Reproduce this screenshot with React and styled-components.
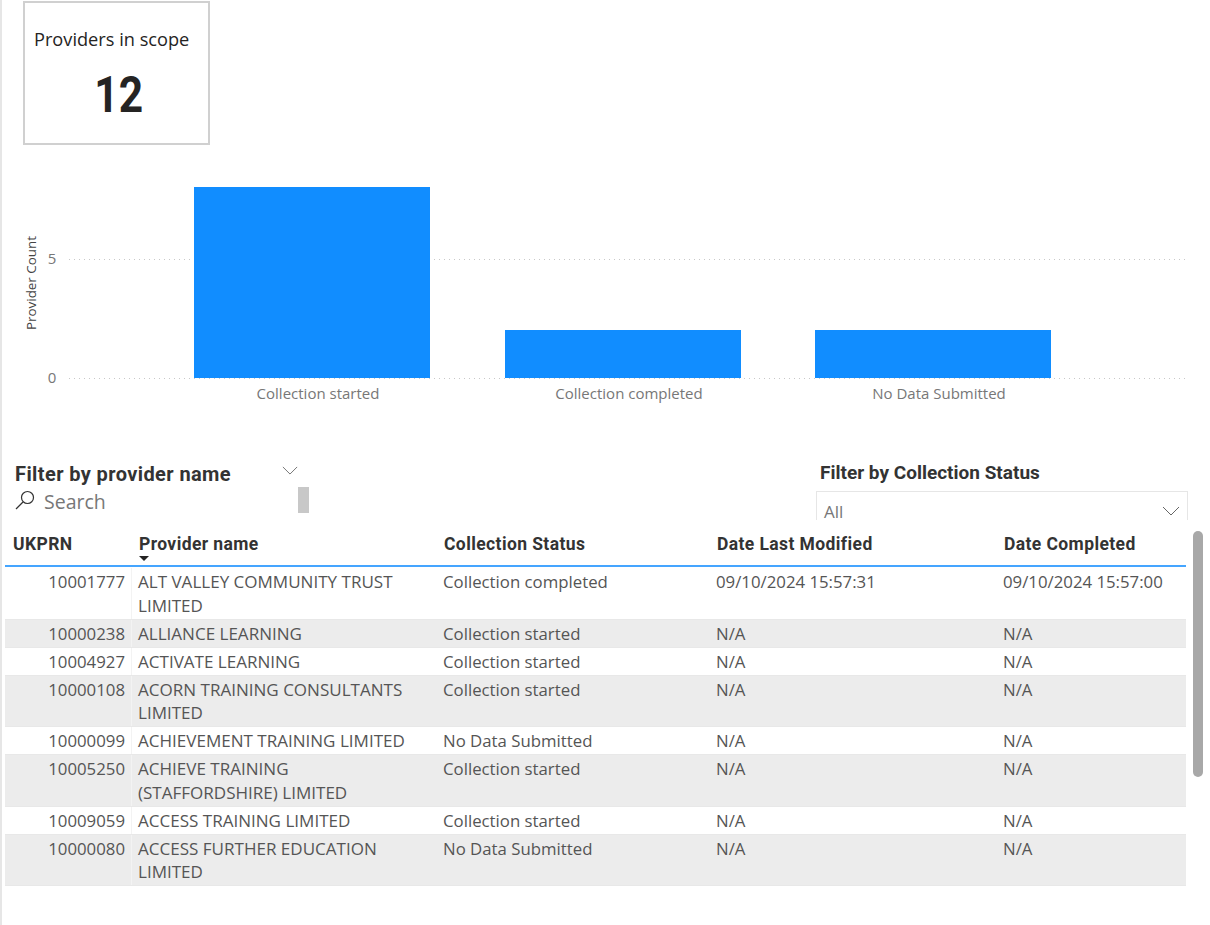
import React from 'react';
import styled, { createGlobalStyle } from 'styled-components';

const BODY_FONT = '"Open Sans", "Noto Sans", "Liberation Sans", sans-serif';
const HEAD_FONT = 'Roboto, "Liberation Sans", sans-serif';

const COLUMNS = '127px 305px 273px 287px 189px';

const BARS = [
  { label: 'Collection started', x: 194, y: 187 },
  { label: 'Collection completed', x: 505, y: 330 },
  { label: 'No Data Submitted', x: 815, y: 330 },
];

const ROWS = [
  { id: '10001777', name: 'ALT VALLEY COMMUNITY TRUST LIMITED', status: 'Collection completed', modified: '09/10/2024 15:57:31', completed: '09/10/2024 15:57:00' },
  { id: '10000238', name: 'ALLIANCE LEARNING', status: 'Collection started', modified: 'N/A', completed: 'N/A' },
  { id: '10004927', name: 'ACTIVATE LEARNING', status: 'Collection started', modified: 'N/A', completed: 'N/A' },
  { id: '10000108', name: 'ACORN TRAINING CONSULTANTS LIMITED', status: 'Collection started', modified: 'N/A', completed: 'N/A' },
  { id: '10000099', name: 'ACHIEVEMENT TRAINING LIMITED', status: 'No Data Submitted', modified: 'N/A', completed: 'N/A' },
  { id: '10005250', name: 'ACHIEVE TRAINING (STAFFORDSHIRE) LIMITED', status: 'Collection started', modified: 'N/A', completed: 'N/A' },
  { id: '10009059', name: 'ACCESS TRAINING LIMITED', status: 'Collection started', modified: 'N/A', completed: 'N/A' },
  { id: '10000080', name: 'ACCESS FURTHER EDUCATION LIMITED', status: 'No Data Submitted', modified: 'N/A', completed: 'N/A' },
];

const Chevron = ({ size = 18 }) => (
  <svg width={size} height={size / 2 + 1} viewBox="0 0 18 10" fill="none" stroke="#666" strokeWidth="1">
    <path d="M1 1l8 8 8-8" />
  </svg>
);

const App = () => (
  <Page>
    <GlobalStyle />
    <Card>
      <CardTitle>Providers in scope</CardTitle>
      <CardValue>12</CardValue>
    </Card>

    <ChartSvg width="1208" height="270" viewBox="2 150 1208 270">
      <text transform="translate(36 283) rotate(-90)" textAnchor="middle" fontSize="13.4" fill="#444">
        Provider Count
      </text>
      <text x="52" y="264" textAnchor="middle" fontSize="15" fill="#777">5</text>
      <text x="52" y="383" textAnchor="middle" fontSize="15" fill="#777">0</text>
      <line x1="69" x2="1188" y1="259.5" y2="259.5" stroke="#c8c8c8" strokeDasharray="1 4" />
      <line x1="69" x2="1188" y1="378.5" y2="378.5" stroke="#c8c8c8" strokeDasharray="1 4" />
      {BARS.map(({ label, x, y }) => (
        <g key={label}>
          <rect x={x} y={y} width="236" height={378 - y} fill="#118DFF" />
          <text x={x + 124} y="399" textAnchor="middle" fontSize="15" fill="#777">{label}</text>
        </g>
      ))}
    </ChartSvg>

    <FilterRow>
      <ProviderSlicer>
        <SlicerHeader>
          <ProviderTitle>Filter by provider name</ProviderTitle>
          <Chevron size={16} />
        </SlicerHeader>
        <SearchRow>
          <svg width="20" height="20" viewBox="0 0 20 20" fill="none" stroke="#333" strokeWidth="1.2">
            <circle cx="12.5" cy="7.5" r="6" />
            <path d="M8 12L1 19" />
          </svg>
          <SearchText>Search</SearchText>
          <SlicerThumb />
        </SearchRow>
      </ProviderSlicer>
      <StatusSlicer>
        <StatusTitle>Filter by Collection Status</StatusTitle>
        <Dropdown>
          <DropdownValue>All</DropdownValue>
          <Chevron />
        </Dropdown>
      </StatusSlicer>
    </FilterRow>

    <TableArea>
      <Table>
        <HeaderRow>
          <HeaderCell>UKPRN</HeaderCell>
          <HeaderCell>
            Provider name
            <SortArrow />
          </HeaderCell>
          <HeaderCell>Collection Status</HeaderCell>
          <HeaderCell>Date Last Modified</HeaderCell>
          <HeaderCell>Date Completed</HeaderCell>
        </HeaderRow>
        {ROWS.map(({ id, name, status, modified, completed }, index) => (
          <Row key={id} $shaded={index % 2 === 1}>
            <IdCell>{id}</IdCell>
            <NameCell>{name}</NameCell>
            <Cell>{status}</Cell>
            <Cell>{modified}</Cell>
            <Cell>{completed}</Cell>
          </Row>
        ))}
      </Table>
      <ScrollThumb />
    </TableArea>
  </Page>
);

export default App;

const GlobalStyle = createGlobalStyle`
  html, body {
    margin: 0;
    padding: 0;
    background: #fff;
  }
`;

const Page = styled.div`
  width: 1208px;
  height: 924px;
  overflow: hidden;
  border-left: 2px solid #e6e6e6;
  font-family: ${BODY_FONT};
  padding-top: 1px;
`;

const Card = styled.div`
  width: 187px;
  height: 144px;
  margin-left: 21px;
  padding: 24px 0 0 9px;
  box-sizing: border-box;
  border: 2px solid #d0d0d0;
`;

const CardTitle = styled.div`
  font-size: 18.2px;
  line-height: 24px;
  color: #252423;
  white-space: nowrap;
`;

const CardValue = styled.div`
  margin-top: 16px;
  padding-left: 56px;
  font-family: ${HEAD_FONT};
  font-size: 50px;
  line-height: 56px;
  font-weight: 700;
  color: #252423;
  transform: scaleX(0.85);
  transform-origin: 85px 0;
`;

const ChartSvg = styled.svg`
  display: block;
  margin-top: 5px;
  font-family: ${BODY_FONT};
`;

const FilterRow = styled.div`
  display: flex;
  justify-content: space-between;
  height: 60px;
  margin-top: 40px;
  padding: 0 22px 0 13px;
`;

const ProviderSlicer = styled.div`
  width: 294px;
`;

const SlicerHeader = styled.div`
  display: flex;
  justify-content: space-between;
  align-items: flex-start;
  height: 26px;
  padding: 1px 11px 0 0;

  svg {
    margin-top: 5px;
  }
`;

const ProviderTitle = styled.div`
  font-family: ${HEAD_FONT};
  font-size: 20px;
  line-height: 26px;
  font-weight: 700;
  letter-spacing: 0.4px;
  color: #333;
`;

const SearchRow = styled.div`
  display: flex;
  align-items: center;
  gap: 9px;
  height: 26px;
`;

const SearchText = styled.span`
  flex: 1;
  padding-top: 2px;
  font-size: 19.5px;
  color: #777;
`;

const SlicerThumb = styled.div`
  width: 11px;
  height: 26px;
  background: #c8c8c8;
`;

const StatusSlicer = styled.div`
  width: 372px;
`;

const StatusTitle = styled.div`
  margin-top: 1px;
  padding-left: 4px;
  font-family: ${HEAD_FONT};
  font-size: 19px;
  line-height: 24px;
  font-weight: 700;
  color: #333;
`;

const Dropdown = styled.div`
  display: flex;
  justify-content: space-between;
  align-items: flex-start;
  height: 29px;
  margin-top: 6px;
  padding: 0 7px 0 7px;
  box-sizing: border-box;
  border: 1px solid #e6e6e6;
  border-bottom: 0;

  svg {
    margin-top: 14px;
  }
`;

const DropdownValue = styled.span`
  padding-top: 12px;
  font-size: 17px;
  line-height: 16px;
  color: #777;
`;

const TableArea = styled.div`
  display: flex;
  align-items: flex-start;
  gap: 7px;
  margin-top: 10px;
  padding-left: 3px;
`;

const Table = styled.div`
  width: 1181px;
`;

const HeaderRow = styled.div`
  display: grid;
  grid-template-columns: ${COLUMNS};
  height: 37px;
  margin-bottom: 1px;
  box-sizing: border-box;
  border-bottom: 2px solid #45a5ff;
`;

const HeaderCell = styled.div`
  position: relative;
  padding: 4px 6px 0 7px;
  font-family: ${HEAD_FONT};
  font-size: 17.5px;
  line-height: 20px;
  font-weight: 700;
  letter-spacing: 0.4px;
  color: #333;
  white-space: nowrap;

  &:first-child {
    padding-left: 8px;
  }
`;

const SortArrow = styled.span`
  position: absolute;
  left: 7px;
  top: 26px;
  border-left: 5px solid transparent;
  border-right: 5px solid transparent;
  border-top: 5px solid #252423;
`;

const Row = styled.div`
  display: grid;
  grid-template-columns: ${COLUMNS};
  background: ${({ $shaded }) => ($shaded ? '#ececec' : '#fff')};
  border-bottom: 1px solid #e8e8e8;
`;

const Cell = styled.div`
  padding: 2px 6px 1.5px 6px;
  font-size: 16.8px;
  line-height: 23.5px;
  color: #555;
`;

const NameCell = styled(Cell)`
  padding-right: 19px;
  font-size: 17.05px;
`;

const IdCell = styled(Cell)`
  padding-left: 0;
  text-align: right;
  border-right: 1px solid #f3f3f3;
`;

const ScrollThumb = styled.div`
  width: 10px;
  height: 246px;
  margin-top: 1px;
  background: #a8a8a8;
  border-radius: 5px;
`;
